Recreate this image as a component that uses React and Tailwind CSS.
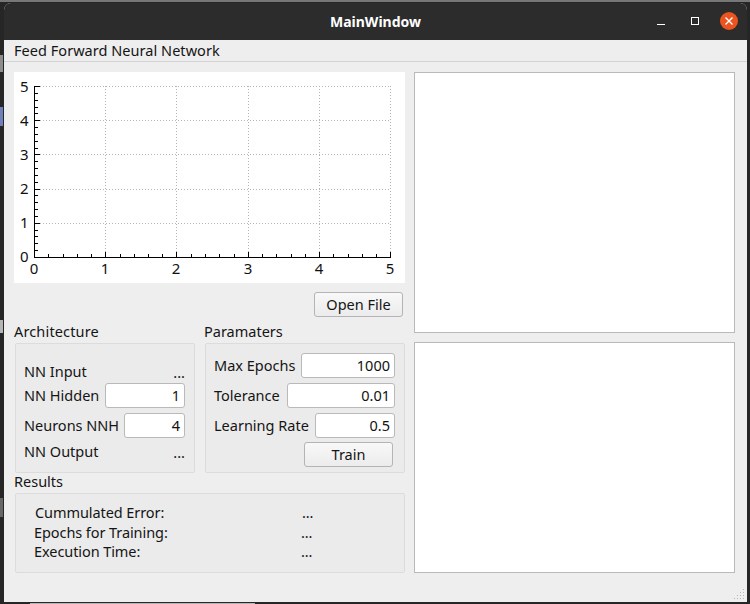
const FONT = "font-['Noto_Sans',sans-serif]";

function Plot() {
  const xs = [34, 105, 176, 248, 319, 390];
  const ys = [257, 223, 189, 154, 120, 86];
  const minorX = [];
  const minorY = [];
  for (let i = 0; i < 5; i++) {
    for (let j = 1; j < 5; j++) {
      minorX.push(Math.round(34 + (i + j / 5) * 71.3));
      minorY.push(Math.round(257 - (i + j / 5) * 34.2));
    }
  }
  return (
    <svg width="391" height="211" viewBox="14 72 391 211" className="block bg-white">
      <g stroke="#b4b4b4" strokeWidth="1" strokeDasharray="1 2" shapeRendering="crispEdges">
        {xs.slice(1).map((x) => (
          <line key={x} x1={x + 0.5} x2={x + 0.5} y1="86" y2="257" />
        ))}
        {ys.slice(1).map((y) => (
          <line key={y} x1="34" x2="391" y1={y + 0.5} y2={y + 0.5} />
        ))}
      </g>
      <g stroke="#000" strokeWidth="1" shapeRendering="crispEdges">
        <line x1="34.5" x2="34.5" y1="86" y2="258" />
        <line x1="34" x2="391" y1="257.5" y2="257.5" />
        {xs.map((x) => (
          <line key={x} x1={x + 0.5} x2={x + 0.5} y1="252" y2="258" />
        ))}
        {ys.map((y) => (
          <line key={y} x1="34" x2="40" y1={y + 0.5} y2={y + 0.5} />
        ))}
        {minorX.map((x) => (
          <line key={x} x1={x + 0.5} x2={x + 0.5} y1="254" y2="258" />
        ))}
        {minorY.map((y) => (
          <line key={y} x1="34" x2="38" y1={y + 0.5} y2={y + 0.5} />
        ))}
      </g>
      <g fill="#111" fontSize="15" fontFamily="'Noto Sans', sans-serif">
        {[5, 4, 3, 2, 1, 0].map((n, i) => (
          <text key={n} x="20" y={92 + i * 34}>{n}</text>
        ))}
        {[0, 1, 2, 3, 4, 5].map((n, i) => (
          <text key={n} x={xs[i]} y="274" textAnchor="middle">{n}</text>
        ))}
      </g>
    </svg>
  );
}

function Field({ value, w }) {
  return (
    <div className={`${w} h-[25px] shrink-0 bg-white border border-[#b9b9b9] rounded-[3px] flex items-center justify-end pr-[4px] text-[#111]`}>
      {value}
    </div>
  );
}

function Row({ label, children, className = "h-[25px]" }) {
  return (
    <div className={`flex items-center justify-between ${className}`}>
      <span>{label}</span>
      {children}
    </div>
  );
}

function Button({ children, className = "" }) {
  return (
    <div className={`h-[25px] w-[89px] flex items-center justify-center rounded-[3px] border border-[#b4b4b4] bg-gradient-to-b from-[#f8f8f8] to-[#ececec] ${className}`}>
      {children}
    </div>
  );
}

function ResultRow({ label, inset = "" }) {
  return (
    <div className={`flex items-center ${inset}`}>
      <span className="w-[267px]">{label}</span>
      <span>...</span>
    </div>
  );
}

function LeftStrip() {
  return (
    <div className="w-[4px] shrink-0 flex flex-col">
      <div className="h-[53px]" />
      <div className="h-[17px] w-[3px] bg-[#8d8d8d]" />
      <div className="h-[35px]" />
      <div className="h-[19px] w-[3px] bg-[#6f80b8]" />
      <div className="h-[194px]" />
      <div className="h-[13px] w-[3px] bg-[#b5b5b5]" />
      <div className="h-[165px]" />
      <div className="h-[19px] w-[3px] bg-[#666666]" />
    </div>
  );
}

export default function App() {
  return (
    <div className={`w-[750px] h-[604px] overflow-hidden bg-[#262626] flex flex-col text-[14.5px] leading-none text-[#151515] ${FONT}`}>
      <div className="h-[2px] shrink-0 bg-[#777777]" />
      <div className="h-[600px] shrink-0 flex">
        <LeftStrip />
        <div className="w-[743px] shrink-0 pt-[1px]">
          <div className="h-[599px] flex flex-col bg-[#eeeeee] rounded-t-[7px]">
            <header className="h-[37px] shrink-0 bg-[#2c2c2c] rounded-t-[7px] flex items-center relative">
              <div className="flex-1 text-center text-white font-bold text-[14px]">MainWindow</div>
              <div className="absolute right-0 top-0 h-full flex items-center">
                <div className="w-[8px] h-[1px] bg-white mr-[26px] mt-[5px]" />
                <div className="w-[8px] h-[8px] border border-white mr-[21px] -mt-[1px]" />
                <div className="w-[18px] h-[18px] rounded-full bg-[#e95420] flex items-center justify-center mr-[9px] -mt-[1px]">
                  <svg width="10" height="10" viewBox="0 0 10 10" stroke="#fff" strokeWidth="1.4">
                    <path d="M1.5 1.5l7 7M8.5 1.5l-7 7" />
                  </svg>
                </div>
              </div>
            </header>

            <div className="h-[22px] shrink-0 border-b border-[#d2d2d2] pl-[10px] flex items-center tracking-[0.04px]">
              Feed Forward Neural Network
            </div>

            <main className="relative flex-1 flex pt-[10px] pl-[10px] gap-[9px]">
              <div className="w-[391px] flex flex-col">
                <Plot />
                <div className="flex justify-end pr-[2px] mt-[9px]">
                  <Button>Open File</Button>
                </div>
                <div className="flex gap-[10px] mt-[7px] pl-[1px]">
                  <section className="w-[180px]">
                    <div className="h-[19px] -ml-[1px] pb-[4px] flex items-center tracking-[0.15px]">Architecture</div>
                    <div className="h-[130px] border border-[#dcdcdc] rounded-[2px] bg-[#ebebeb] pt-[16px] pl-[8px] pr-[9px]">
                      <Row label="NN Input" className="h-[23px]"><span className="pt-[2px]">...</span></Row>
                      <Row label="NN Hidden"><Field value="1" w="w-[80px]" /></Row>
                      <Row label="Neurons NNH" className="h-[25px] mt-[5px]"><Field value="4" w="w-[61px]" /></Row>
                      <Row label="NN Output" className="h-[24px] mt-[1px]"><span className="pt-[2px]">...</span></Row>
                    </div>
                  </section>
                  <section className="w-[200px]">
                    <div className="h-[19px] -ml-[1px] pb-[4px] flex items-center">Paramaters</div>
                    <div className="h-[130px] border border-[#dcdcdc] rounded-[2px] bg-[#ebebeb] pt-[9px] pl-[8px] pr-[9px]">
                      <Row label="Max Epochs"><Field value="1000" w="w-[94px]" /></Row>
                      <Row label="Tolerance" className="h-[25px] mt-[5px]"><Field value="0.01" w="w-[108px]" /></Row>
                      <Row label="Learning Rate" className="h-[25px] mt-[5px]"><Field value="0.5" w="w-[80px]" /></Row>
                      <div className="flex justify-end pr-[2px] mt-[4px]">
                        <Button>Train</Button>
                      </div>
                    </div>
                  </section>
                </div>
                <section className="pl-[1px]">
                  <div className="h-[20px] -ml-[1px] pb-[4px] flex items-center">Results</div>
                  <div className="h-[80px] border border-[#dcdcdc] rounded-[2px] bg-[#ebebeb] pt-[8px] pl-[18px] tracking-[-0.08px]">
                    <ResultRow label="Cummulated Error:" inset="pl-[1px] h-[20px]" />
                    <ResultRow label="Epochs for Training:" inset="h-[20px]" />
                    <ResultRow label="Execution Time:" inset="h-[19px]" />
                  </div>
                </section>
              </div>
              <div className="w-[321px] flex flex-col gap-[9px]">
                <div className="h-[261px] bg-white border border-[#b9b9b9]" />
                <div className="h-[231px] bg-white border border-[#b9b9b9]" />
              </div>
              <svg width="12" height="12" viewBox="0 0 12 12" fill="#b5b5b5" className="absolute right-[1px] bottom-[1px]">
                <rect x="9" y="0" width="1" height="1" />
                <rect x="6" y="3" width="1" height="1" />
                <rect x="9" y="3" width="1" height="1" />
                <rect x="3" y="6" width="1" height="1" />
                <rect x="6" y="6" width="1" height="1" />
                <rect x="9" y="6" width="1" height="1" />
                <rect x="0" y="9" width="1" height="1" />
                <rect x="3" y="9" width="1" height="1" />
                <rect x="6" y="9" width="1" height="1" />
                <rect x="9" y="9" width="1" height="1" />
              </svg>
            </main>
          </div>
        </div>
      </div>
      <div className="h-[2px] shrink-0 flex items-end pl-[30px]">
        <div className="h-[1px] w-[225px] bg-[#b5b5b5]" />
      </div>
    </div>
  );
}
